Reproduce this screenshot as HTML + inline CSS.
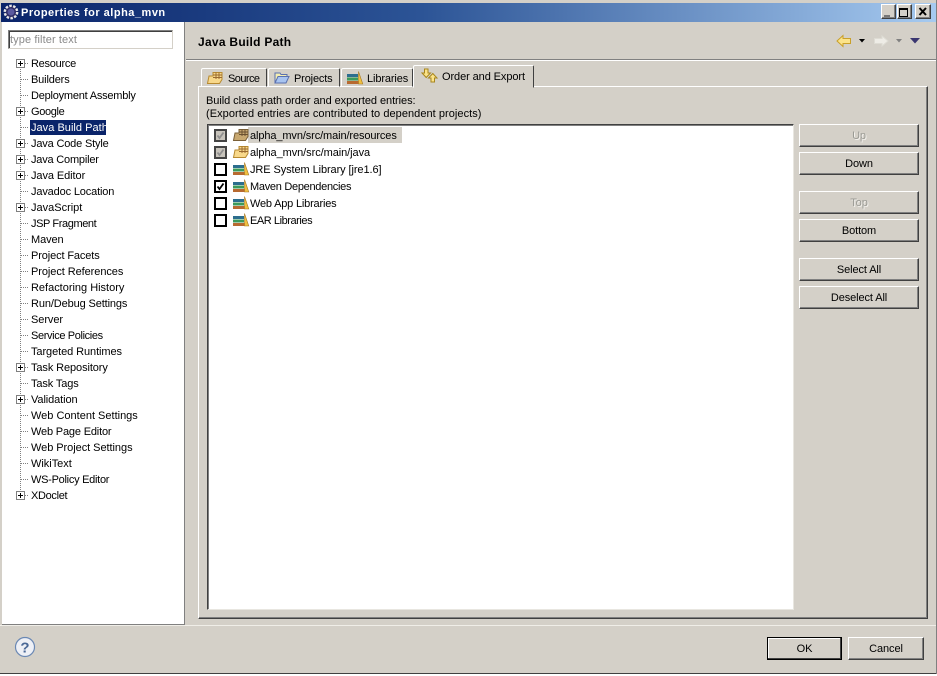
<!DOCTYPE html>
<html><head><meta charset="utf-8"><style>
html,body{margin:0;padding:0;width:937px;height:676px;overflow:hidden;background:#d4d0c8}
body{position:relative;font:11px "Liberation Sans",sans-serif;color:#000}
.a{position:absolute}
.t{position:absolute;white-space:nowrap;line-height:14px;letter-spacing:-.12px;margin-top:1px}
.btn{position:absolute;box-sizing:border-box;background:#d4d0c8;border:1px solid;border-color:#fff #404040 #404040 #fff;box-shadow:inset -1px -1px 0 #808080;text-align:center;font-size:11px;line-height:22px;letter-spacing:-.1px}
.dis{color:#9a9a94;text-shadow:1px 1px 0 #f4f2ee}
.plus{position:absolute;left:16px;width:9px;height:9px;box-sizing:border-box;border:1px solid #808080;background:#fff}
.plus:before{content:"";position:absolute;left:1px;top:3px;width:5px;height:1px;background:#000}
.plus:after{content:"";position:absolute;left:3px;top:1px;width:1px;height:5px;background:#000}
.dot{position:absolute;left:21px;width:8px;height:1px;background:repeating-linear-gradient(90deg,#808080 0 1px,transparent 1px 2px)}
.cb{position:absolute;left:214px;width:13px;height:13px;box-sizing:border-box;border:2px solid #000;background:#fff}
.cb.g{background:#c8c4bc;border-color:#444}
svg{position:absolute;overflow:visible}
</style></head><body>
<!-- window frame -->
<div class="a" style="left:0;top:0;width:937px;height:3px;background:#d4d0c8"></div>
<div class="a" style="left:1px;top:3px;width:935px;height:19px;background:linear-gradient(90deg,#0a246a 0,#2c5496 45%,#a6caf0 100%)"></div>
<svg style="left:3px;top:4px" width="16" height="16" viewBox="0 0 16 16"><circle cx="8" cy="8" r="6.200" fill="#2e2e66" stroke="#e8e8e8" stroke-width="2.400" stroke-dasharray="2.500 1.400"/><circle cx="8" cy="8" r="3.500" fill="#5a5aa0"/></svg>
<div class="t" style="left:21px;top:5px;color:#fff;font-weight:bold;font-size:11px;letter-spacing:.5px">Properties for alpha_mvn</div>
<div class="btn" style="left:881px;top:4px;width:15px;height:15px"></div><div class="a" style="left:884px;top:15px;width:6px;height:2px;background:#777"></div>
<div class="btn" style="left:897px;top:4px;width:15px;height:15px"></div><div class="a" style="left:899px;top:8px;width:9px;height:9px;box-sizing:border-box;border:1px solid #000;border-top-width:2px"></div>
<div class="btn" style="left:915px;top:4px;width:16px;height:15px"></div>
<svg style="left:918px;top:7px" width="10" height="9"><path d="M1.500 1L8 8M8 1L1.500 8" stroke="#000" stroke-width="2"/></svg>
<!-- left pane -->
<div class="a" style="left:2px;top:22px;width:182px;height:602px;background:#fff"></div>
<div class="a" style="left:184px;top:22px;width:1px;height:603px;background:#808080"></div>
<div class="a" style="left:2px;top:624px;width:183px;height:1px;background:#808080"></div>
<div class="a" style="left:8px;top:30px;width:165px;height:19px;box-sizing:border-box;border:1px solid;border-color:#808080 #d4d0c8 #d4d0c8 #808080;box-shadow:inset 1px 1px 0 #404040"></div>
<div class="t" style="left:10px;top:32px;color:#8a8a8a;letter-spacing:.1px">type filter text</div>
<div class="a" style="left:20px;top:63px;width:1px;height:432px;background:repeating-linear-gradient(180deg,#808080 0 1px,transparent 1px 2px)"></div>
<div class="a" style="left:30px;top:120px;width:76px;height:15px;background:#0a246a"></div>
<div class="dot" style="top:63px"></div><div class="plus" style="top:59px"></div><div class="t" style="left:31px;top:56px;letter-spacing:-.27px">Resource</div>
<div class="dot" style="top:79px"></div><div class="t" style="left:31px;top:72px;letter-spacing:-.15px">Builders</div>
<div class="dot" style="top:95px"></div><div class="t" style="left:31px;top:88px;letter-spacing:-.22px">Deployment Assembly</div>
<div class="dot" style="top:111px"></div><div class="plus" style="top:107px"></div><div class="t" style="left:31px;top:104px;letter-spacing:-.35px">Google</div>
<div class="dot" style="top:127px"></div><div class="t" style="left:31px;top:120px;color:#fff;letter-spacing:.03px">Java Build Path</div>
<div class="dot" style="top:143px"></div><div class="plus" style="top:139px"></div><div class="t" style="left:31px;top:136px;letter-spacing:-.17px">Java Code Style</div>
<div class="dot" style="top:159px"></div><div class="plus" style="top:155px"></div><div class="t" style="left:31px;top:152px;letter-spacing:-.2px">Java Compiler</div>
<div class="dot" style="top:175px"></div><div class="plus" style="top:171px"></div><div class="t" style="left:31px;top:168px;letter-spacing:-.08px">Java Editor</div>
<div class="dot" style="top:191px"></div><div class="t" style="left:31px;top:184px;letter-spacing:-.15px">Javadoc Location</div>
<div class="dot" style="top:207px"></div><div class="plus" style="top:203px"></div><div class="t" style="left:31px;top:200px;letter-spacing:0">JavaScript</div>
<div class="dot" style="top:223px"></div><div class="t" style="left:31px;top:216px;letter-spacing:-.4px">JSP Fragment</div>
<div class="dot" style="top:239px"></div><div class="t" style="left:31px;top:232px;letter-spacing:-.1px">Maven</div>
<div class="dot" style="top:255px"></div><div class="t" style="left:31px;top:248px;letter-spacing:-.12px">Project Facets</div>
<div class="dot" style="top:271px"></div><div class="t" style="left:31px;top:264px;letter-spacing:-.07px">Project References</div>
<div class="dot" style="top:287px"></div><div class="t" style="left:31px;top:280px;letter-spacing:-.01px">Refactoring History</div>
<div class="dot" style="top:303px"></div><div class="t" style="left:31px;top:296px;letter-spacing:-.12px">Run/Debug Settings</div>
<div class="dot" style="top:319px"></div><div class="t" style="left:31px;top:312px;letter-spacing:-.07px">Server</div>
<div class="dot" style="top:335px"></div><div class="t" style="left:31px;top:328px;letter-spacing:-.37px">Service Policies</div>
<div class="dot" style="top:351px"></div><div class="t" style="left:31px;top:344px;letter-spacing:-.08px">Targeted Runtimes</div>
<div class="dot" style="top:367px"></div><div class="plus" style="top:363px"></div><div class="t" style="left:31px;top:360px;letter-spacing:-.1px">Task Repository</div>
<div class="dot" style="top:383px"></div><div class="t" style="left:31px;top:376px;letter-spacing:-.12px">Task Tags</div>
<div class="dot" style="top:399px"></div><div class="plus" style="top:395px"></div><div class="t" style="left:31px;top:392px;letter-spacing:-.1px">Validation</div>
<div class="dot" style="top:415px"></div><div class="t" style="left:31px;top:408px;letter-spacing:0">Web Content Settings</div>
<div class="dot" style="top:431px"></div><div class="t" style="left:31px;top:424px;letter-spacing:-.17px">Web Page Editor</div>
<div class="dot" style="top:447px"></div><div class="t" style="left:31px;top:440px;letter-spacing:-.05px">Web Project Settings</div>
<div class="dot" style="top:463px"></div><div class="t" style="left:31px;top:456px;letter-spacing:-.02px">WikiText</div>
<div class="dot" style="top:479px"></div><div class="t" style="left:31px;top:472px;letter-spacing:-.27px">WS-Policy Editor</div>
<div class="dot" style="top:495px"></div><div class="plus" style="top:491px"></div><div class="t" style="left:31px;top:488px;letter-spacing:-.33px">XDoclet</div>
<!-- header -->
<div class="t" style="left:198px;top:34px;font-weight:bold;font-size:12px;letter-spacing:.27px">Java Build Path</div>
<div class="a" style="left:186px;top:59px;width:751px;height:1px;background:#808080"></div>
<div class="a" style="left:186px;top:60px;width:751px;height:1px;background:#fff"></div>
<svg style="left:836px;top:34px" width="16" height="14"><path d="M1 7L7 1.500V4.500H14.500V9.500H7V12.500Z" fill="#fbe38a" stroke="#c9a02a"/></svg>
<svg style="left:859px;top:39px" width="7" height="4"><path d="M0 0H6L3 3.500Z" fill="#000"/></svg>
<svg style="left:873px;top:34px" width="16" height="14"><path d="M15 7L9 2V4.500H1.500V9.500H9V12Z" fill="#eeece6" stroke="#dedcd4"/></svg>
<svg style="left:896px;top:39px" width="7" height="4"><path d="M0 0H6L3 3.500Z" fill="#808080"/></svg>
<svg style="left:910px;top:38px" width="11" height="6"><path d="M0 0H10L5 5.500Z" fill="#3a3670"/></svg>
<!-- tab folder -->
<div class="a" style="left:198px;top:86px;width:730px;height:533px;box-sizing:border-box;border:1px solid;border-color:#fff #404040 #404040 #fff;box-shadow:inset -1px -1px 0 #808080"></div>
<div class="a" style="left:201px;top:68px;width:66px;height:19px;box-sizing:border-box;border:1px solid;border-color:#fff #404040 transparent #fff;border-radius:2px 2px 0 0"></div>
<div class="a" style="left:268px;top:68px;width:72px;height:19px;box-sizing:border-box;border:1px solid;border-color:#fff #404040 transparent #fff;border-radius:2px 2px 0 0"></div>
<div class="a" style="left:341px;top:68px;width:72px;height:19px;box-sizing:border-box;border:1px solid;border-color:#fff #404040 transparent #fff;border-radius:2px 2px 0 0"></div>
<div class="a" style="left:413px;top:65px;width:121px;height:23px;box-sizing:border-box;background:#d4d0c8;border:1px solid;border-color:#fff #404040 #d4d0c8 #fff;border-radius:2px 2px 0 0"></div>
<svg style="left:207px;top:71px" width="16" height="13" viewBox="0 0 16 13"><path d="M0.500 12.500L2 5H6V1.500H15V8.500L12.500 12.500Z" fill="#f8d88a" stroke="#b88a30"/><path d="M6 4H15M6 6.500H15M9 1.500V8M12 1.500V8" stroke="#9a6a30" fill="none"/></svg>
<svg style="left:274px;top:71px" width="16" height="13" viewBox="0 0 16 13"><path d="M1 12V2H6L7 3.500H13V5.500" fill="#f4eeb0" stroke="#5a70b0"/><path d="M1 12L4 5.500H15L12 12Z" fill="#a8c4f0" stroke="#5a70b0"/></svg>
<svg style="left:347px;top:71px" width="16" height="13" viewBox="0 0 16 13"><rect x="0" y="3" width="11" height="3" fill="#2d6e8e"/><rect x="0" y="6.500" width="11" height="3" fill="#3c9a5a"/><rect x="0" y="10" width="12" height="3" fill="#b86a30"/><path d="M11.500 0.500L15.800 13H11.500V2Z" fill="#f0c040" stroke="#a87820" stroke-width=".6"/></svg>
<svg style="left:421px;top:68px" width="18" height="15" viewBox="0 0 18 15"><path d="M1 5H3.500V1H7V5H9.500L5.200 9.500Z" fill="#fbe38a" stroke="#a8861c"/><path d="M7.500 10H10V14H13.500V10H16L11.800 5.500Z" fill="#fbe38a" stroke="#a8861c"/></svg>
<div class="t" style="left:228px;top:71px;letter-spacing:-.57px">Source</div>
<div class="t" style="left:294px;top:71px;letter-spacing:-.15px">Projects</div>
<div class="t" style="left:367px;top:71px">Libraries</div>
<div class="t" style="left:442px;top:69px;letter-spacing:-.09px">Order and Export</div>
<div class="t" style="left:206px;top:93px;letter-spacing:-.06px">Build class path order and exported entries:</div>
<div class="t" style="left:206px;top:106px;letter-spacing:.05px">(Exported entries are contributed to dependent projects)</div>
<!-- list -->
<div class="a" style="left:207px;top:124px;width:587px;height:486px;box-sizing:border-box;background:#fff;border:1px solid;border-color:#404040 #e8e6e0 #e8e6e0 #404040;box-shadow:inset 1px 1px 0 #808080"></div>
<div class="a" style="left:248px;top:127px;width:154px;height:16px;background:#d4d0c8"></div>
<div class="cb g" style="top:129px"></div><svg style="left:216px;top:131px" width="9" height="9"><path d="M1.500 4.500L3.500 7L7.500 1.500" stroke="#909090" stroke-width="1.800" fill="none"/></svg>
<div class="cb g" style="top:146px"></div><svg style="left:216px;top:148px" width="9" height="9"><path d="M1.500 4.500L3.500 7L7.500 1.500" stroke="#909090" stroke-width="1.800" fill="none"/></svg>
<div class="cb" style="top:163px"></div>
<div class="cb" style="top:180px"></div><svg style="left:216px;top:182px" width="9" height="9"><path d="M1.500 4.500L3.500 7L7.500 1.500" stroke="#000" stroke-width="1.800" fill="none"/></svg>
<div class="cb" style="top:197px"></div>
<div class="cb" style="top:214px"></div>
<svg style="left:233px;top:128px" width="16" height="13" viewBox="0 0 16 13"><path d="M0.500 12.500L2 5H6V1.500H15V8.500L12.500 12.500Z" fill="#c8a870" stroke="#7a6038"/><path d="M6 4H15M6 6.500H15M9 1.500V8M12 1.500V8" stroke="#6a5030" fill="none"/></svg>
<svg style="left:233px;top:145px" width="16" height="13" viewBox="0 0 16 13"><path d="M0.500 12.500L2 5H6V1.500H15V8.500L12.500 12.500Z" fill="#f8d88a" stroke="#b88a30"/><path d="M6 4H15M6 6.500H15M9 1.500V8M12 1.500V8" stroke="#9a6a30" fill="none"/></svg>
<svg style="left:233px;top:162px" width="16" height="13" viewBox="0 0 16 13"><rect x="0" y="3" width="11" height="3" fill="#2d6e8e"/><rect x="0" y="6.500" width="11" height="3" fill="#3c9a5a"/><rect x="0" y="10" width="12" height="3" fill="#b86a30"/><path d="M11.500 0.500L15.800 13H11.500V2Z" fill="#f0c040" stroke="#a87820" stroke-width=".6"/></svg>
<svg style="left:233px;top:179px" width="16" height="13" viewBox="0 0 16 13"><rect x="0" y="3" width="11" height="3" fill="#2d6e8e"/><rect x="0" y="6.500" width="11" height="3" fill="#3c9a5a"/><rect x="0" y="10" width="12" height="3" fill="#b86a30"/><path d="M11.500 0.500L15.800 13H11.500V2Z" fill="#f0c040" stroke="#a87820" stroke-width=".6"/></svg>
<svg style="left:233px;top:196px" width="16" height="13" viewBox="0 0 16 13"><rect x="0" y="3" width="11" height="3" fill="#2d6e8e"/><rect x="0" y="6.500" width="11" height="3" fill="#3c9a5a"/><rect x="0" y="10" width="12" height="3" fill="#b86a30"/><path d="M11.500 0.500L15.800 13H11.500V2Z" fill="#f0c040" stroke="#a87820" stroke-width=".6"/></svg>
<svg style="left:233px;top:213px" width="16" height="13" viewBox="0 0 16 13"><rect x="0" y="3" width="11" height="3" fill="#2d6e8e"/><rect x="0" y="6.500" width="11" height="3" fill="#3c9a5a"/><rect x="0" y="10" width="12" height="3" fill="#b86a30"/><path d="M11.500 0.500L15.800 13H11.500V2Z" fill="#f0c040" stroke="#a87820" stroke-width=".6"/></svg>
<div class="t" style="left:250px;top:128px;letter-spacing:-.11px">alpha_mvn/src/main/resources</div>
<div class="t" style="left:250px;top:145px;letter-spacing:-.07px">alpha_mvn/src/main/java</div>
<div class="t" style="left:250px;top:162px;letter-spacing:-.09px">JRE System Library [jre1.6]</div>
<div class="t" style="left:250px;top:179px;letter-spacing:-.29px">Maven Dependencies</div>
<div class="t" style="left:250px;top:196px;letter-spacing:-.19px">Web App Libraries</div>
<div class="t" style="left:250px;top:213px;letter-spacing:-.44px">EAR Libraries</div>
<!-- side buttons -->
<div class="btn dis" style="left:799px;top:124px;width:120px;height:23px">Up</div>
<div class="btn" style="left:799px;top:152px;width:120px;height:23px">Down</div>
<div class="btn dis" style="left:799px;top:191px;width:120px;height:23px">Top</div>
<div class="btn" style="left:799px;top:219px;width:120px;height:23px">Bottom</div>
<div class="btn" style="left:799px;top:258px;width:120px;height:23px">Select All</div>
<div class="btn" style="left:799px;top:286px;width:120px;height:23px">Deselect All</div>
<!-- bottom -->
<div class="a" style="left:0;top:625px;width:937px;height:1px;background:#f0eee8"></div>
<svg style="left:14px;top:636px" width="22" height="22" viewBox="0 0 22 22"><circle cx="11" cy="11" r="9.500" fill="#eef0f6" stroke="#6a88b4" stroke-width="1.200"/><text x="11" y="16.500" text-anchor="middle" font-family="Liberation Sans" font-weight="bold" font-size="15" fill="#4a6896">?</text></svg>
<div class="btn" style="left:767px;top:637px;width:75px;height:23px;border:1px solid #000;box-shadow:inset -1px -1px 0 #404040,inset 1px 1px 0 #fff">OK</div>
<div class="btn" style="left:848px;top:637px;width:76px;height:23px">Cancel</div>
<div class="a" style="left:0;top:673px;width:937px;height:1px;background:#404040"></div>
<div class="a" style="left:0;top:674px;width:937px;height:2px;background:#fff"></div>
<div class="a" style="left:936px;top:0;width:1px;height:674px;background:#808080"></div>
</body></html>
